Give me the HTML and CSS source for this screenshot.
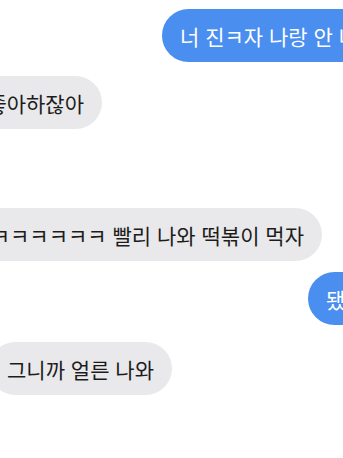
FILE: index.html
```html
<!DOCTYPE html>
<html lang="ko">
<head>
<meta charset="utf-8">
<link rel="stylesheet" href="styles.css">
</head>
<body>
<div class="chat">
  <div class="row me-row r1"><div class="bubble me">너 진ㅋ자 나랑 안 나와</div></div>
  <div class="row you-row r2"><div class="bubble you">좋아하잖아</div></div>
  <div class="row you-row r3"><div class="bubble you">ㅋㅋㅋㅋㅋㅋㅋ 빨리 나와 떡볶이 먹자</div></div>
  <div class="row me-row r4"><div class="bubble me">됐어</div></div>
  <div class="row you-row r5"><div class="bubble you">그니까 얼른 나와</div></div>
</div>
</body>
</html>
```
FILE: styles.css
```css
html, body {
  margin: 0;
  padding: 0;
  background: #ffffff;
  width: 343px;
  height: 458px;
  overflow: hidden;
}
.chat {
  display: flex;
  flex-direction: column;
  align-items: flex-start;
  padding-top: 9px;
  font-family: "Noto Sans CJK KR", "Noto Sans", sans-serif;
}
.row {
  display: flex;
}
.me-row {
  justify-content: flex-start;
}
.you-row {
  justify-content: flex-end;
}
.bubble {
  box-sizing: border-box;
  height: 53px;
  padding: 0 18px;
  border-radius: 27px;
  display: flex;
  align-items: center;
  white-space: nowrap;
  font-size: 21px;
  flex-shrink: 0;
}
.me {
  background: #4a8ef0;
  color: #ffffff;
}
.you {
  background: #e9e9eb;
  color: #1c1c1c;
}
.r1 { margin-left: 162px; }
.r2 { margin-top: 14px; width: 102px; }
.r3 { margin-top: 79px; width: 322px; }
.r4 { margin-top: 11px; margin-left: 308px; }
.r5 { margin-top: 17px; width: 172px; }
```
